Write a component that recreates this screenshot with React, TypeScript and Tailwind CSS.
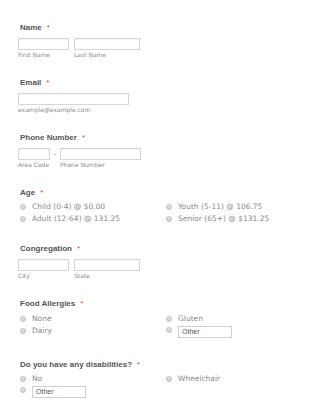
import React from 'react';

const labelFont = { fontFamily: '"Liberation Sans", Arial, sans-serif' };
const optFont = { fontFamily: '"DejaVu Sans", Verdana, sans-serif' };

function Label({ text, mb = 'mb-[5px]' }: { text: string; mb?: string }) {
  return (
    <div className={`h-[10px] leading-[10px] text-[8px] font-bold text-[#555] pl-[2px] ${mb}`} style={labelFont}>
      {text}
      <span className="text-[#f23a3c] ml-[5px] font-normal">*</span>
    </div>
  );
}

function Box({ w }: { w: string }) {
  return <div className={`${w} h-[12px] border border-[#d6d6d6] bg-white shadow-[inset_0_1px_1px_rgba(0,0,0,0.04)]`} />;
}

function Sub({ text, w }: { text: string; w: string }) {
  return (
    <div className={`${w} h-[8px] leading-[8px] text-[6px] text-[#8a8a8a]`} style={optFont}>
      {text}
    </div>
  );
}

function Radio({ extra = '' }: { extra?: string }) {
  return (
    <span className={`inline-block w-[6px] h-[6px] rounded-full border border-[#c4c4c4] bg-gradient-to-b from-[#e6e6e6] to-[#cfcfcf] shrink-0 ${extra}`} />
  );
}

function Opt({ text }: { text: string }) {
  return (
    <div className="h-[12px] flex items-center pl-[2px]">
      <Radio />
      <span className="ml-[6px] text-[7.5px] text-[#8a8a8a] leading-none" style={optFont}>{text}</span>
    </div>
  );
}

function OtherOpt() {
  return (
    <div className="h-[12px] flex items-start pl-[2px]">
      <Radio extra="mt-[2px]" />
      <div className="ml-[6px] mt-[1px] w-[54px] h-[12px] border border-[#cfcfcf] bg-white flex items-center pl-[3px]">
        <span className="text-[7px] text-[#555]" style={labelFont}>Other</span>
      </div>
    </div>
  );
}

export default function App() {
  return (
    <div className="w-[325px] h-[400px] overflow-hidden bg-white pl-[18px] pt-[23px]">
      {/* Name */}
      <div className="mb-[19px]">
        <Label text="Name" />
        <div className="flex gap-[5px]">
          <Box w="w-[51px]" />
          <Box w="w-[66px]" />
        </div>
        <div className="flex gap-[5px] mt-[1px]">
          <Sub text="First Name" w="w-[51px]" />
          <Sub text="Last Name" w="w-[66px]" />
        </div>
      </div>

      {/* Email */}
      <div className="mb-[19px]">
        <Label text="Email" />
        <Box w="w-[111px]" />
        <div className="mt-[1px]">
          <Sub text="example@example.com" w="w-[111px]" />
        </div>
      </div>

      {/* Phone */}
      <div className="mb-[19px]">
        <Label text="Phone Number" />
        <div className="flex items-center">
          <Box w="w-[32px]" />
          <span className="w-[10px] text-center text-[7px] text-[#777]" style={labelFont}>-</span>
          <Box w="w-[81px]" />
        </div>
        <div className="flex mt-[1px]">
          <Sub text="Area Code" w="w-[42px]" />
          <Sub text="Phone Number" w="w-[81px]" />
        </div>
      </div>

      {/* Age */}
      <div className="mb-[19px]">
        <Label text="Age" mb="mb-[3px]" />
        <div className="grid grid-cols-[146px_1fr]">
          <Opt text="Child (0-4) @ $0.00" />
          <Opt text="Youth (5-11) @ 106.75" />
          <Opt text="Adult (12-64) @ 131.25" />
          <Opt text="Senior (65+) @ $131.25" />
        </div>
      </div>

      {/* Congregation */}
      <div className="mb-[19px]">
        <Label text="Congregation" />
        <div className="flex gap-[5px]">
          <Box w="w-[51px]" />
          <Box w="w-[66px]" />
        </div>
        <div className="flex gap-[5px] mt-[1px]">
          <Sub text="City" w="w-[51px]" />
          <Sub text="State" w="w-[66px]" />
        </div>
      </div>

      {/* Food Allergies */}
      <div className="mb-[23px]">
        <Label text="Food Allergies" mb="mb-[4px]" />
        <div className="grid grid-cols-[146px_1fr]">
          <Opt text="None" />
          <Opt text="Gluten" />
          <Opt text="Dairy" />
          <OtherOpt />
        </div>
      </div>

      {/* Disabilities */}
      <div>
        <Label text="Do you have any disabilities?" mb="mb-[3px]" />
        <div className="grid grid-cols-[146px_1fr]">
          <Opt text="No" />
          <Opt text="Wheelchair" />
          <OtherOpt />
        </div>
      </div>
    </div>
  );
}
